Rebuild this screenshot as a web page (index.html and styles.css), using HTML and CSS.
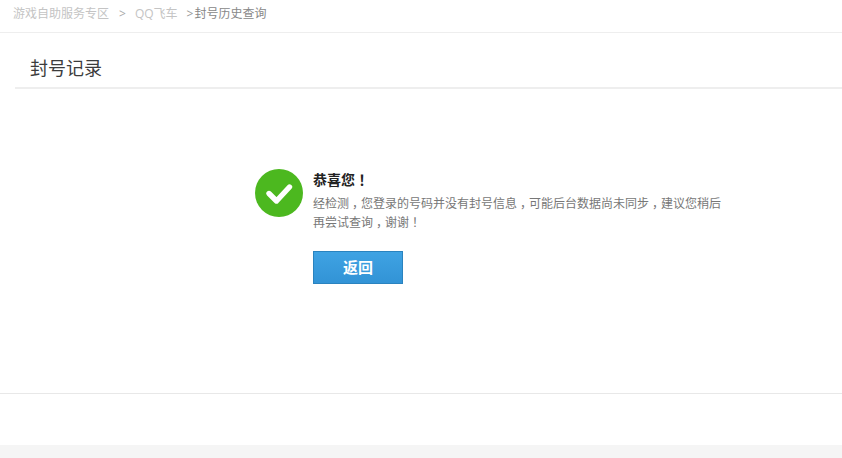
FILE: index.html
```html
<!DOCTYPE html>
<html lang="zh-CN">
<head>
<meta charset="utf-8">
<title>封号记录</title>
<link rel="stylesheet" href="styles.css">
</head>
<body>
<nav class="crumbs">
  <a class="crumb">游戏自助服务专区</a><span class="sep">&gt;</span><a class="crumb">QQ飞车</a><span class="sep2">&gt;</span><span class="current">封号历史查询</span>
</nav>
<main class="panel">
  <h1 class="title">封号记录</h1>
  <section class="result">
    <svg class="ok" width="48" height="48" viewBox="0 0 48 48" aria-hidden="true">
      <circle cx="24" cy="24" r="24" fill="#4cb81f"/>
      <path d="M14 24.5l7.5 7.5L34.5 18" fill="none" stroke="#fff" stroke-width="5.4" stroke-linecap="round" stroke-linejoin="round"/>
    </svg>
    <div class="msg">
      <h2 class="head">恭喜您<span class="punct">！</span></h2>
      <p class="text">经检测<span class="punct">，</span>您登录的号码并没有封号信息<span class="punct">，</span>可能后台数据尚未同步<span class="punct">，</span>建议您稍后<br>再尝试查询<span class="punct">，</span>谢谢<span class="punct">！</span></p>
      <a class="btn">返回</a>
    </div>
  </section>
</main>
<footer class="foot"></footer>
</body>
</html>
```
FILE: styles.css
```css
html, body { margin: 0; padding: 0; }
body {
  width: 842px;
  height: 458px;
  overflow: hidden;
  background: #fff;
  font-family: "Noto Sans CJK SC", "Liberation Sans", sans-serif;
  display: flex;
  flex-direction: column;
}
.crumbs {
  flex: none;
  height: 33px;
  box-sizing: border-box;
  padding-left: 13px;
  border-bottom: 1px solid #eee;
  font-family: "Open Sans", "Noto Sans CJK SC", sans-serif;
  font-size: 12px;
  line-height: 28px;
  color: #c4c4c4;
  white-space: nowrap;
}
.sep { margin: 0 9px 0 10px; color: #aaa; }
.sep2 { margin: 0 1px 0 9px; color: #999; }
.current { color: #888; }
.panel {
  flex: none;
  height: 361px;
  box-sizing: border-box;
  border-bottom: 1px solid #e8e8e8;
  padding-left: 15px;
}
.title {
  margin: 0;
  height: 56px;
  box-sizing: border-box;
  padding: 20px 0 0 15px;
  border-bottom: 2px solid #eee;
  font-size: 18px;
  font-weight: 400;
  line-height: 28px;
  color: #3c3c3c;
}
.result { display: flex; gap: 10px; margin: 80px 0 0 240px; width: 470px; }
.ok { flex: none; }
.msg { flex: 1; }
.head { margin: 0; font-size: 14px; font-weight: 700; line-height: 20px; color: #222; }
.text { margin: 4px 0 0; font-size: 12px; line-height: 19px; color: #777; }
.punct { font-feature-settings: "halt"; padding: 0 .25em; }
.btn {
  display: block;
  width: 90px;
  height: 33px;
  box-sizing: border-box;
  margin-top: 20px;
  background: linear-gradient(#3fa3e3, #3293d6);
  border: 1px solid #2a83bf;
  color: #fff;
  font-family: "Noto Sans CJK SC", sans-serif;
  font-size: 15px;
  font-weight: 700;
  line-height: 29px;
  text-align: center;
}
.foot { flex: 1; margin-top: 51px; background: #f5f5f5; }
```
